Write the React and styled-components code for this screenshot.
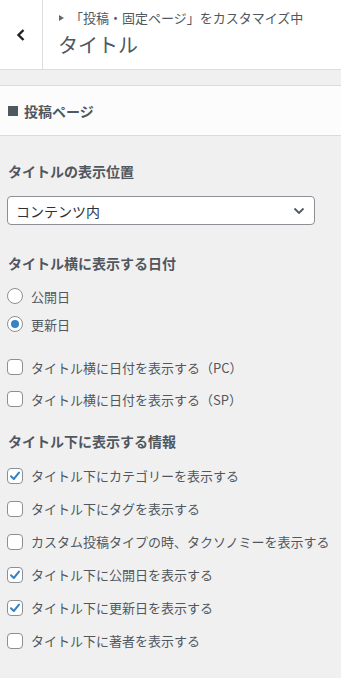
import React from 'react';
import styled, { createGlobalStyle } from 'styled-components';

const Global = createGlobalStyle`
  html, body {
    margin: 0;
    padding: 0;
    background: #f0f0f0;
    font-family: 'Noto Sans CJK JP', 'Noto Sans', sans-serif;
    color: #50575e;
  }
`;

const Page = styled.div`
  width: 341px;
  min-height: 678px;
  background: #f0f0f0;
`;

const Header = styled.header`
  display: flex;
  height: 69px;
  background: #fff;
  border-bottom: 1px solid #dcdcde;
`;

const Back = styled.div`
  width: 42px;
  flex: none;
  display: flex;
  align-items: center;
  justify-content: center;
  border-right: 1px solid #dcdcde;
  color: #1d2327;
`;

const HeadText = styled.div`
  display: flex;
  flex-direction: column;
  padding: 8px 0 0 15px;
`;

const Crumb = styled.div`
  display: flex;
  align-items: center;
  gap: 6px;
  font-size: 13px;
  line-height: 20px;
  color: #50575e;
`;

const Tri = styled.span`
  width: 0;
  height: 0;
  border-top: 3px solid transparent;
  border-bottom: 3px solid transparent;
  border-left: 5px solid #646970;
  margin-left: 1px;
`;

const Title = styled.h1`
  margin: 2px 0 0;
  font-size: 20px;
  font-weight: 400;
  line-height: 30px;
  color: #50575e;
`;

const Spacer = styled.div`
  height: 15px;
`;

const SectionHead = styled.div`
  display: flex;
  align-items: center;
  gap: 6px;
  height: 49px;
  padding: 0 8px;
  background: #fcfcfc;
  border-top: 1px solid #dcdcde;
  border-bottom: 1px solid #dcdcde;
  font-size: 14px;
  font-weight: 700;
  color: #50575e;
`;

const Square = styled.span`
  width: 10px;
  height: 10px;
  background: #50575e;
`;

const Body = styled.div`
  display: flex;
  flex-direction: column;
  padding: 25px 26px 30px 7px;
`;

const Heading = styled.h3`
  margin: ${p => p.$top || 0}px 0 0 1px;
  font-size: 14px;
  font-weight: 700;
  line-height: 20px;
  color: #50575e;
`;

const SelectBox = styled.div`
  margin-top: 15px;
  height: 27px;
  display: flex;
  align-items: center;
  justify-content: space-between;
  padding: 0 9px 0 8px;
  background: #fff;
  border: 1px solid #8c8f94;
  border-radius: 4px;
  font-size: 14px;
  color: #2c3338;
`;

const Group = styled.div`
  display: flex;
  flex-direction: column;
  margin-top: ${p => p.$top || 0}px;
`;

const Row = styled.label`
  display: flex;
  align-items: center;
  gap: 8px;
  height: ${p => p.$h || 32}px;
  font-size: 13px;
  color: #50575e;
  white-space: nowrap;
`;

const Radio = styled.span`
  width: 14px;
  height: 14px;
  flex: none;
  border: 1px solid #8c8f94;
  border-radius: 50%;
  background: #fff;
  display: flex;
  align-items: center;
  justify-content: center;
  &::after {
    content: '';
    display: ${p => (p.$on ? 'block' : 'none')};
    width: 8px;
    height: 8px;
    border-radius: 50%;
    background: #3582c4;
  }
`;

const Box = styled.span`
  width: 14px;
  height: 14px;
  flex: none;
  border: 1px solid #8c8f94;
  border-radius: 4px;
  background: #fff;
  display: flex;
  align-items: center;
  justify-content: center;
`;

const Check = ({ on, children }) => (
  <Row $h={33}>
    <Box>
      {on && (
        <svg width="12" height="12" viewBox="0 0 12 12">
          <path d="M2 6.2 L4.8 9 L10 2.6" fill="none" stroke="#3582c4" strokeWidth="2" strokeLinecap="round" strokeLinejoin="round" />
        </svg>
      )}
    </Box>
    {children}
  </Row>
);

export default function App() {
  return (
    <Page>
      <Global />
      <Header>
        <Back>
          <svg width="10" height="14" viewBox="0 0 10 14">
            <path d="M7.5 2 L2.5 7 L7.5 12" fill="none" stroke="#1d2327" strokeWidth="2.4" />
          </svg>
        </Back>
        <HeadText>
          <Crumb>
            <Tri />
            「投稿・固定ページ」をカスタマイズ中
          </Crumb>
          <Title>タイトル</Title>
        </HeadText>
      </Header>
      <Spacer />
      <SectionHead>
        <Square />
        投稿ページ
      </SectionHead>
      <Body>
        <Heading>タイトルの表示位置</Heading>
        <SelectBox>
          コンテンツ内
          <svg width="12" height="8" viewBox="0 0 12 8">
            <path d="M1.5 1.5 L6 6 L10.5 1.5" fill="none" stroke="#50575e" strokeWidth="1.8" />
          </svg>
        </SelectBox>
        <Heading $top={28}>タイトル横に表示する日付</Heading>
        <Group $top={9}>
          <Row $h={28}><Radio />公開日</Row>
          <Row $h={28}><Radio $on />更新日</Row>
        </Group>
        <Group $top={13}>
          <Row><Box />タイトル横に日付を表示する（PC）</Row>
          <Row><Box />タイトル横に日付を表示する（SP）</Row>
        </Group>
        <Heading $top={16}>タイトル下に表示する情報</Heading>
        <Group $top={8}>
          <Check on>タイトル下にカテゴリーを表示する</Check>
          <Check>タイトル下にタグを表示する</Check>
          <Check>カスタム投稿タイプの時、タクソノミーを表示する</Check>
          <Check on>タイトル下に公開日を表示する</Check>
          <Check on>タイトル下に更新日を表示する</Check>
          <Check>タイトル下に著者を表示する</Check>
        </Group>
      </Body>
    </Page>
  );
}
